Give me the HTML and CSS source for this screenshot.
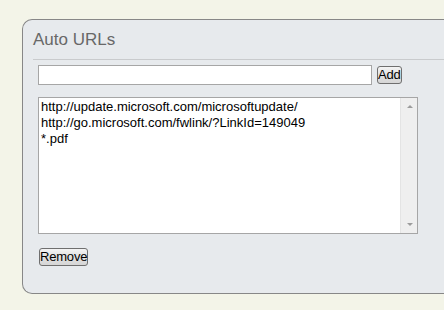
FILE: index.html
```html
<!DOCTYPE html>
<html>
<head>
<meta charset="utf-8">
<link rel="stylesheet" href="styles.css">
</head>
<body>
<div class="page">
  <section class="panel">
    <h2 class="panel-title">Auto URLs</h2>
    <div class="add-row">
      <input class="url-input" type="text">
      <button class="btn">Add</button>
    </div>
    <div class="list">
      <textarea class="list-text" readonly>http://update.microsoft.com/microsoftupdate/
http://go.microsoft.com/fwlink/?LinkId=149049
*.pdf</textarea>
      <div class="scroll">
        <span class="arrow arrow-up"></span>
        <span class="arrow arrow-down"></span>
      </div>
    </div>
    <div class="actions">
      <button class="btn">Remove</button>
    </div>
  </section>
</div>
</body>
</html>
```

FILE: styles.css
```css
html, body {
  margin: 0;
  padding: 0;
  overflow: hidden;
  background: #f3f4e8;
}

.page {
  padding: 19px 0 0 22px;
}

.panel {
  box-sizing: border-box;
  background: #e7eaed;
  border: 1px solid #878787;
  border-right: none;
  border-radius: 10px 0 0 10px;
  padding: 0 0 27px 15px;
}

.panel-title {
  margin: 0 0 0 -5px;
  padding: 10px 0 9px 0;
  border-bottom: 1px solid #c9cbcd;
  font-family: "Liberation Sans", Arial, sans-serif;
  font-weight: normal;
  font-size: 17px;
  line-height: 20px;
  color: #686868;
}

.add-row {
  display: flex;
  align-items: center;
  gap: 5px;
  margin-top: 5px;
}

.url-input {
  box-sizing: border-box;
  width: 334px;
  height: 20px;
  margin: 0;
  padding: 1px 2px;
  border: 1px solid #a6a6a6;
  background: #fff;
  font-family: "Liberation Sans", Arial, sans-serif;
  font-size: 13px;
  outline: none;
}

.btn {
  box-sizing: border-box;
  height: 18px;
  margin: 0;
  padding: 0;
  border: 1px solid #6f6f6f;
  border-radius: 3px;
  background: linear-gradient(#f4f4f4, #e0e0e0 50%, #d6d6d6);
  font-family: "Liberation Sans", Arial, sans-serif;
  font-size: 13px;
  line-height: 16px;
  letter-spacing: -0.2px;
  color: #000;
}

.list {
  box-sizing: border-box;
  display: flex;
  width: 380px;
  height: 137px;
  margin-top: 12px;
  border: 1px solid #a6a6a6;
  background: #fff;
}

.list-text {
  flex: 1;
  margin: 0;
  padding: 1px 2px;
  border: none;
  outline: none;
  resize: none;
  overflow: hidden;
  background: #fff;
  font-family: "Liberation Sans", Arial, sans-serif;
  font-size: 13px;
  line-height: 16px;
  color: #000;
}

.scroll {
  box-sizing: border-box;
  width: 17px;
  display: flex;
  flex-direction: column;
  align-items: center;
  justify-content: space-between;
  padding: 7px 0 7px 1px;
  background: #efefef;
  border-left: 1px solid #e4e4e4;
}

.arrow {
  width: 0;
  height: 0;
  border-left: 3.5px solid transparent;
  border-right: 3.5px solid transparent;
}

.arrow-up {
  border-bottom: 3px solid #9c9c9c;
}

.arrow-down {
  border-top: 3px solid #9c9c9c;
}

.actions {
  margin: 13px 0 0 1px;
}
```
